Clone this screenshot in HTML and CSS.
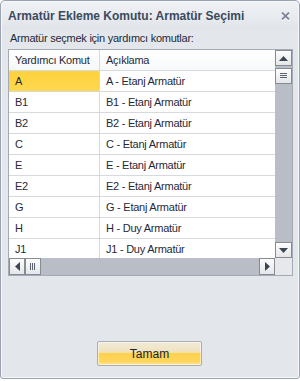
FILE: index.html
```html
<!doctype html>
<html lang="tr">

<head>
  <meta charset="utf-8">
  <title>Armatür Ekleme Komutu: Armatür Seçimi</title>
  <link rel="stylesheet" href="styles.css">
</head>

<body>

  <div class="dlg-window">
    <header class="dlg-titlebar">
      <span class="dlg-title">Armatür Ekleme Komutu: Armatür Seçimi</span>
      <span class="dlg-close">
        <svg width="9" height="8" viewBox="0 0 9 8">
          <path d="M1 .5 L8 7.5 M8 .5 L1 7.5" stroke="#7d8797" stroke-width="1.8" fill="none"/>
        </svg>
      </span>
    </header>

    <main class="dlg-body">
      <p class="dlg-label">Armatür seçmek için yardımcı komutlar:</p>

      <div class="grid">
        <div class="grid-view">
          <table class="grid-table">
            <thead>
              <tr><th class="col-cmd">Yardımcı Komut</th><th>Açıklama</th></tr>
            </thead>
            <tbody>
              <tr><td class="col-cmd selected">A</td><td>A - Etanj Armatür</td></tr>
              <tr><td class="col-cmd">B1</td><td>B1 - Etanj Armatür</td></tr>
              <tr><td class="col-cmd">B2</td><td>B2 - Etanj Armatür</td></tr>
              <tr><td class="col-cmd">C</td><td>C - Etanj Armatür</td></tr>
              <tr><td class="col-cmd">E</td><td>E - Etanj Armatür</td></tr>
              <tr><td class="col-cmd">E2</td><td>E2 - Etanj Armatür</td></tr>
              <tr><td class="col-cmd">G</td><td>G - Etanj Armatür</td></tr>
              <tr><td class="col-cmd">H</td><td>H - Duy Armatür</td></tr>
              <tr><td class="col-cmd">J1</td><td>J1 - Duy Armatür</td></tr>
            </tbody>
          </table>
        </div>

        <div class="vscroll">
          <span class="sb-btn">
            <svg width="9" height="5" viewBox="0 0 9 5"><path d="M0 5 L4.5 0 L9 5 Z" fill="#3e4654"/></svg>
          </span>
          <span class="sb-btn sb-thumb">
            <svg width="7" height="6" viewBox="0 0 7 6"><path d="M0 .5 H7 M0 2.5 H7 M0 4.5 H7" stroke="#5a6270" stroke-width="1"/></svg>
          </span>
          <span class="sb-track"></span>
          <span class="sb-btn">
            <svg width="9" height="5" viewBox="0 0 9 5"><path d="M0 0 L4.5 5 L9 0 Z" fill="#3e4654"/></svg>
          </span>
        </div>

        <div class="hscroll">
          <span class="sb-btn">
            <svg width="5" height="9" viewBox="0 0 5 9"><path d="M5 0 L0 4.5 L5 9 Z" fill="#3e4654"/></svg>
          </span>
          <span class="sb-btn sb-thumb">
            <svg width="6" height="7" viewBox="0 0 6 7"><path d="M.5 0 V7 M2.5 0 V7 M4.5 0 V7" stroke="#5a6270" stroke-width="1"/></svg>
          </span>
          <span class="sb-track"></span>
          <span class="sb-btn">
            <svg width="5" height="9" viewBox="0 0 5 9"><path d="M0 0 L5 4.5 L0 9 Z" fill="#3e4654"/></svg>
          </span>
        </div>

        <div class="grid-corner"></div>
      </div>

      <div class="dlg-actions">
        <button class="btn-ok" type="button">Tamam</button>
      </div>
    </main>
  </div>

</body>

</html>
```

FILE: styles.css
```css
:root {
  --frame: #9aa3af;
  --bg: #e3e6ea;
  --text: #1f2a38;
  --titleText: #3b4a5d;
  --gridLine: #d6d9de;
  --gridBorder: #a4abb5;
  --track: #b9bdc6;
  --btnBorder: #868c96;
}

html body {
  margin: 0px;
  padding: 0px;
}

body {
  font-family: "Liberation Sans", Arial, sans-serif;
  font-size: 11px;
  letter-spacing: -.25px;
  color: var(--text);
  background-color: #fff;
}

.dlg-window {
  width: 298px;
  height: 377px;
  border: 1px solid var(--frame);
  border-radius: 5px 5px 3px 3px;
  background: linear-gradient(#f0f2f5, #e0e4e9 29px, var(--bg) 30px);
  box-shadow: inset 0 0 0 1px #f7f8fa;
  display: flex;
  flex-direction: column;
  overflow: hidden;
}

.dlg-titlebar {
  height: 29px;
  display: flex;
  align-items: center;
  justify-content: space-between;
  padding: 0 9px 0 7px;
}

.dlg-title {
  font-weight: bold;
  font-size: 12px;
  letter-spacing: 0;
  color: var(--titleText);
}

.dlg-close {
  display: flex;
  filter: drop-shadow(0 1px 0 #fff);
}

.dlg-body {
  flex: 1;
  display: flex;
  flex-direction: column;
  padding: 0 6px 0 7px;
}

.dlg-label {
  margin: 1px 0 4px 2px;
  line-height: 14px;
}

.grid {
  display: grid;
  grid-template-columns: 1fr 17px;
  grid-template-rows: 208px 17px;
  border: 1px solid var(--gridBorder);
  background-color: #fff;
}

.grid-view {
  overflow: hidden;
}

.grid-table {
  width: 100%;
  border-collapse: collapse;
  table-layout: fixed;
}

.grid-table th,
.grid-table td {
  height: 20px;
  padding: 0 0 0 6px;
  text-align: left;
  font-weight: normal;
  border-bottom: 1px solid var(--gridLine);
  white-space: nowrap;
}

.grid-table th {
  background: linear-gradient(#ffffff, #f7f8f9);
}

.grid-table .col-cmd {
  width: 84px;
  border-right: 1px solid var(--gridLine);
}

.grid-table td.selected {
  background: linear-gradient(#fed13d, #ffd84f);
}

.vscroll,
.hscroll {
  display: flex;
  background-color: var(--track);
}

.vscroll {
  flex-direction: column;
}

.sb-track {
  flex: 1;
}

.sb-btn {
  box-sizing: border-box;
  width: 17px;
  height: 17px;
  display: flex;
  align-items: center;
  justify-content: center;
  border: 1px solid var(--btnBorder);
  background: linear-gradient(#fdfdfd, #e4e6e9);
}

.vscroll .sb-btn {
  height: 16px;
}

.vscroll .sb-thumb {
  margin-top: 2px;
}

.hscroll .sb-btn {
  width: 16px;
}

.grid-corner {
  background-color: #e6e8ec;
}

.dlg-actions {
  flex: 1;
  display: flex;
  justify-content: center;
  align-items: flex-end;
  padding-bottom: 12px;
}

.btn-ok {
  width: 105px;
  height: 25px;
  font-family: "Liberation Sans", Arial, sans-serif;
  font-size: 12px;
  letter-spacing: 0;
  color: #1b2330;
  border: 1px solid #a9adb4;
  border-radius: 2px;
  background: linear-gradient(#f1ead8, #efe2bd 45%, #ffd24c 50%, #ffd55e 85%, #ffe8a6);
  box-shadow: inset 0 0 0 1px rgba(255, 255, 255, .5);
  margin-right: 2px;
}
```
